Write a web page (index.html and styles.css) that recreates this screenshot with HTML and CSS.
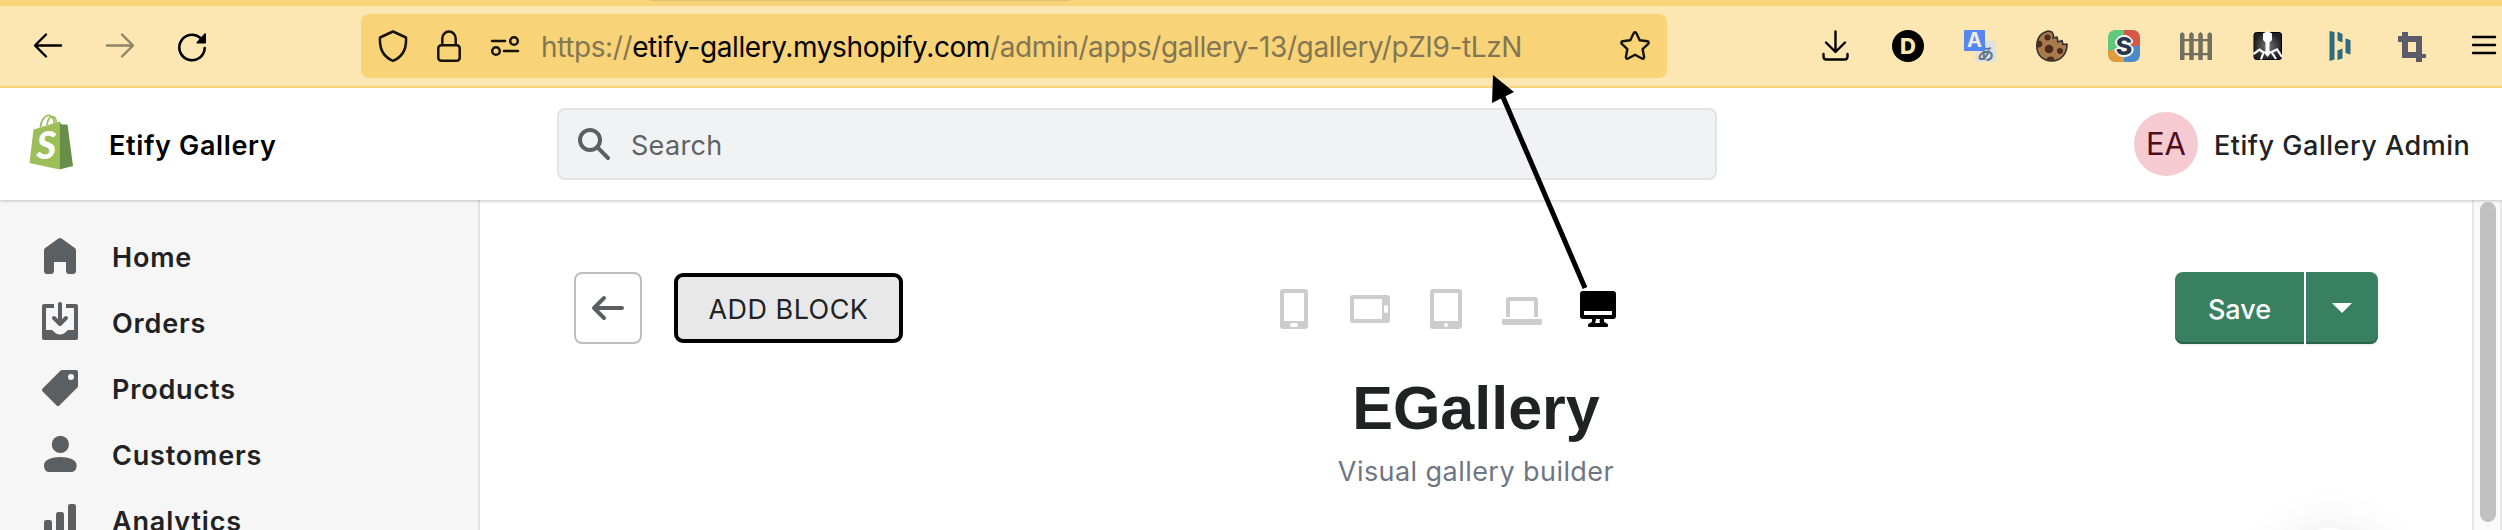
FILE: index.html
```html
<!DOCTYPE html>
<html lang="en">
<head>
<meta charset="utf-8">
<title>Etify Gallery</title>
<link rel="stylesheet" href="styles.css">
</head>
<body>
<div class="window">
  <div class="tabstrip"><div class="tab-edge"></div></div>
  <nav class="toolbar">
    <div class="nav-buttons">
      <svg class="i32" viewBox="0 0 32 32" fill="none" stroke="#000" stroke-width="2.4" stroke-linecap="round" stroke-linejoin="round"><path d="M29 15.500H3.500M14 4.500L3 15.500l11 11"/></svg>
      <svg class="i32" viewBox="0 0 32 32" fill="none" stroke="#8f8468" stroke-width="2.4" stroke-linecap="round" stroke-linejoin="round"><path d="M3 15.500h25.500M18 4.500l11 11-11 11"/></svg>
      <svg class="i32" viewBox="0 0 32 32"><path d="M28.700 18a12.700 12.700 0 1 1-4.500-10.200" fill="none" stroke="#000" stroke-width="2.600" stroke-linecap="round"/><path d="M30 4v8.500a1 1 0 0 1-1 1h-7.500c-1 0-1.300-1-.7-1.600L28.500 3.500c.6-.6 1.500-.3 1.500.5z"/></svg>
    </div>
    <div class="urlbar">
      <svg class="i32" viewBox="0 0 32 32" fill="none" stroke="#15140a" stroke-width="2.500" stroke-linejoin="round"><path d="M16 1.500L29 7.500c.7 12-3.500 19.500-13 23.300C6.500 27 2.300 19.500 3 7.500z"/></svg>
      <svg class="i32 lock" viewBox="0 0 32 32" fill="none" stroke="#15140a" stroke-width="2.500"><rect x="5.300" y="15.300" width="21.400" height="15.400" rx="3"/><path d="M9.300 15V8.500a6.700 7 0 0 1 13.400 0V15"/></svg>
      <svg class="i32 perms" viewBox="0 0 32 32" fill="none" stroke="#15140a" stroke-width="2.500" stroke-linecap="round"><path d="M3 11h13M15 21h14"/><circle cx="25" cy="11" r="3.800"/><circle cx="7" cy="21" r="3.800"/></svg>
      <div class="url">https://<span class="host">etify-gallery.myshopify.com</span>/admin/apps/gallery-13/gallery/pZI9-tLzN</div>
      <svg class="i32 star" viewBox="0 0 32 32" fill="none" stroke="#15140a" stroke-width="2.400" stroke-linejoin="round"><path d="M14.600 3.200c.5-1.200 2.300-1.200 2.800 0l3.300 7 7.700 1c1.300.2 1.700 1.700.8 2.600l-5.600 5.300 1.500 7.800c.2 1.300-1.100 2.200-2.200 1.600L16 24.700l-6.900 3.800c-1.100.6-2.400-.3-2.200-1.600l1.500-7.800-5.600-5.300c-.9-.9-.5-2.400.8-2.600l7.700-1z"/></svg>
    </div>
    <div class="extensions">
      <svg class="i32" viewBox="0 0 32 32" fill="none" stroke="#000" stroke-width="2.400" stroke-linecap="round" stroke-linejoin="round"><path d="M15.500 1.500v20M6 12.500l9.500 9.500 9.500-9.500M3.500 24v2.500q0 3 3 3h18q3 0 3-3V24"/></svg>
      <div class="badge-d">D</div>
      <div class="translate"><span class="tr-back">あ</span><span class="tr-front">A</span></div>
      <svg class="i32" viewBox="0 0 32 32"><path d="M12 1l4 1 1.500 3-.5 3 4-1 1 5 4-1.500 1 4 4-.500c.3 10-6.500 17-15 17C6 31 .8 24 .8 16 .8 8 5 3 12 1z" fill="#a9794c" stroke="#33302e" stroke-width="1.600" stroke-linejoin="round"/><g fill="#4a2b1c"><circle cx="11.500" cy="7.500" r="3"/><circle cx="13" cy="19" r="4.300"/><circle cx="24" cy="21" r="3"/><path d="M1 11a3.500 3.500 0 1 1 0 6zM10.500 30.500a4 4 0 0 1 8 0z"/></g></svg>
      <div class="badge-s"><span>S</span></div>
      <svg class="i32" viewBox="0 0 32 32" fill="#737060"><path d="M0 4l2.200-2L4.500 4v26H0zM9.200 4l2.200-2 2.300 2v26H9.200zM18.300 4l2.200-2 2.300 2v26h-4.500zM27.500 4l2.200-2L32 4v26h-4.500z"/><path d="M0 9h32v2.200H0zM0 23h32v2.200H0z"/></svg>
      <svg class="i32" viewBox="0 0 32 32"><defs><radialGradient id="ph"><stop offset="0" stop-color="#777"/><stop offset="1" stop-color="#222"/></radialGradient></defs><rect x="2" y="2.500" width="27.500" height="27" rx="2.500" fill="url(#ph)" stroke="#000"/><path d="M1.500 24l6-4.500 4 3-2.500 7M30 27l-5-7.500-5.500 2.500 4.500 7" fill="none" stroke="#fff" stroke-width="2.200"/><path d="M15.500 1l4.500 2.500v6.500l-2.500 2.500v8.500l2 1-4 5-4-5 2-1v-8.500L11 10V3.500z" fill="#fff"/></svg>
      <svg class="i32" viewBox="0 0 32 32" fill="#2f6b7c"><path d="M5.500 1l5 1v27.500l-5 1.500zM13.500 1.500l5 2.500v8.500l-5-2zM21.500 8.500l5 1.500v14.500l-5-1.500zM13.500 20.500l5-2v10l-5 1.500z"/></svg>
      <svg class="i32" viewBox="0 0 32 32" fill="#5c5b69"><path d="M6 2h6v4h14v18h4v4h-4v4h-6v-4H6V12H2V6h4zM12 12v10h8V12z" fill-rule="evenodd"/></svg>
      <svg class="i32" viewBox="0 0 32 32" stroke="#000" stroke-width="2.400" stroke-linecap="round"><path d="M5 7h22M5 15h22M5 23h22"/></svg>
    </div>
  </nav>
  <header class="topbar">
    <div class="brand">
      <svg class="logo" viewBox="0 0 48 56"><path d="M5.500 15.500L31.500 7.500v48L1.500 49z" fill="#9cbf59"/><path d="M31.500 7.500l2 3h6l5.500 41.500-13.500 3.500z" fill="#688e49"/><path d="M12.500 13C13 5 18 .8 21.500 1.500c3 .8 4.500 4 4.800 8M19 11c1-7 4-8.500 6-8.300 2 .5 3 2.500 3.300 5.800" fill="none" stroke="#9cbf59" stroke-width="1.800"/><text class="logo-s" x="8.500" y="45">S</text></svg>
      <span class="store">Etify Gallery</span>
    </div>
    <div class="search">
      <svg class="i40" viewBox="0 0 20 20" fill="none" stroke="#5c5f62" stroke-width="2"><circle cx="8" cy="8" r="5"/><path d="M11.600 11.600l5.400 5.400" stroke-linecap="round"/></svg>
      <span class="placeholder">Search</span>
    </div>
    <div class="user"><span class="avatar">EA</span><span class="user-name">Etify Gallery Admin</span></div>
  </header>
  <div class="body">
    <aside class="sidebar">
      <a class="item"><svg class="i40" viewBox="0 0 20 20"><path d="M18 7.261V17.500c0 .841-.672 1.500-1.500 1.500h-2c-.828 0-1.500-.659-1.500-1.500V13H7v4.477C7 18.318 6.328 19 5.500 19h-2c-.828 0-1.500-.682-1.500-1.523V7.261a1.500 1.500 0 01.615-1.210l6.590-4.820a1.481 1.481 0 011.590 0l6.590 4.820A1.500 1.500 0 0118 7.260z"/></svg><span class="label">Home</span></a>
      <a class="item"><svg class="i40" viewBox="0 0 20 20"><path d="M2 1h5v2H3v11h3l2 1.700q2 1 4 0L14 14h3V3h-4V1h5a1 1 0 011 1v16a1 1 0 01-1 1H2a1 1 0 01-1-1V2a1 1 0 011-1z"/><path d="M10 1v10M7 8l3 3 3-3" fill="none" stroke="#5c5f62" stroke-width="2" stroke-linecap="round" stroke-linejoin="round"/></svg><span class="label">Orders</span></a>
      <a class="item"><svg class="i40" viewBox="0 0 20 20"><path fill-rule="evenodd" d="M10.300 1.300A1 1 0 0111 1h7a1 1 0 011 1v7a1 1 0 01-.3.700l-9 9a1 1 0 01-1.400 0l-7-7a1 1 0 010-1.400zM15.500 6a1.500 1.500 0 100-3 1.500 1.500 0 000 3z"/></svg><span class="label">Products</span></a>
      <a class="item"><svg class="i40" viewBox="0 0 20 20"><circle cx="10.200" cy="5.200" r="4.300"/><path d="M2 15.500c0-2.600 4-4 8.200-4s8.100 1.400 8.100 4c0 2.200-1 3.500-2.800 3.500h-11C2.700 19 2 17.500 2 15.500z"/></svg><span class="label">Customers</span></a>
      <a class="item"><svg class="i40" viewBox="0 0 20 20"><rect x="2" y="10" width="4" height="12" rx="1.200"/><rect x="8" y="6" width="4" height="16" rx="1.200"/><rect x="14" y="2" width="4" height="18" rx="1.200"/></svg><span class="label">Analytics</span></a>
    </aside>
    <main class="page">
      <div class="actions">
        <div class="left">
          <button class="back"><svg class="i40" viewBox="0 0 20 20" fill="none" stroke="#5c5f62" stroke-width="2" stroke-linecap="round" stroke-linejoin="round"><path d="M17 10H4M8 5l-5 5 5 5"/></svg></button>
          <button class="add">ADD BLOCK</button>
        </div>
        <div class="devices">
          <svg width="28" height="40" viewBox="0 0 28 40" fill="#ccc"><path fill-rule="evenodd" d="M3 0h22a3 3 0 013 3v34a3 3 0 01-3 3H3a3 3 0 01-3-3V3a3 3 0 013-3zM4 4v28h20V4zM12 34a2 2 0 000 4h4a2 2 0 000-4z"/></svg>
          <svg width="40" height="28" viewBox="0 0 40 28" fill="#ccc"><path fill-rule="evenodd" d="M3 0h34a3 3 0 013 3v22a3 3 0 01-3 3H3a3 3 0 01-3-3V3a3 3 0 013-3zM4 4v20h28V4zM34 12a2 2 0 014 0v4a2 2 0 01-4 0z"/></svg>
          <svg width="32" height="40" viewBox="0 0 32 40" fill="#ccc"><path fill-rule="evenodd" d="M3 0h26a3 3 0 013 3v34a3 3 0 01-3 3H3a3 3 0 01-3-3V3a3 3 0 013-3zM4 4v28h24V4zM16 34a2 2 0 100 4 2 2 0 000-4z"/></svg>
          <svg class="laptop" width="40" height="28" viewBox="0 0 40 28" fill="#ccc"><path d="M4 20V3a3 3 0 013-3h26a3 3 0 013 3v17h-4V4H8v16zM0 22h40v4a2 2 0 01-2 2H2a2 2 0 01-2-2z"/></svg>
          <svg width="36" height="36" viewBox="0 0 36 36"><path fill-rule="evenodd" d="M3 0h30a3 3 0 013 3v22a3 3 0 01-3 3h-9v2c0 2 4 2 4 4v1a1 1 0 01-1 1H9a1 1 0 01-1-1v-1c0-2 4-2 4-4v-2H3a3 3 0 01-3-3V3a3 3 0 013-3zM4 20v4h28v-4zM16 28q0 2-1 4h5q-1-2 0-4z"/></svg>
        </div>
        <div class="save-group"><button class="save">Save</button><button class="more"><svg width="20" height="10" viewBox="0 0 20 10" fill="#fff"><path d="M0 0h20L10 10z"/></svg></button></div>
      </div>
      <h1 class="title">EGallery</h1>
      <p class="subtitle">Visual gallery builder</p>
      <div class="fab"></div>
    </main>
    <div class="scrollbar"><div class="thumb"></div></div>
  </div>
  <svg class="annotation" viewBox="0 0 100 220"><path d="M13 23L95 214" stroke="#000" stroke-width="5"/><path d="M3 1l21 17L2 29z"/></svg>
</div>
</body>
</html>
```
FILE: styles.css
```css
* { box-sizing: border-box; }
body { margin: 0; font-family: Inter, "Liberation Sans", sans-serif; font-size: 27px; color: #202223; }
svg { display: block; flex: none; }
button { font: inherit; padding: 0; margin: 0; border: 0; }
.i32 { width: 32px; height: 32px; }
.i40 { width: 40px; height: 40px; }
.window { position: relative; width: 2502px; height: 530px; overflow: hidden; background: #fff; display: flex; flex-direction: column; }
.tabstrip { height: 6px; flex: none; background: #f8d377; padding-left: 650px; }
.tab-edge { width: 420px; height: 1px; background: #dfbe6c; }
.toolbar { height: 82px; flex: none; background: #fce7b3; border-bottom: 2px solid #f8d377; display: flex; align-items: center; padding: 0 0 0 32px; }
.nav-buttons { display: flex; gap: 40px; width: 329px; flex: none; }
.urlbar { width: 1306px; flex: none; height: 64px; border-radius: 8px; background: #f8d377; display: flex; align-items: center; padding: 0 16px; }
.lock { margin-left: 24px; }
.perms { margin-left: 24px; }
.url { margin-left: 20px; padding-top: 2px; flex: 1; white-space: nowrap; color: #827653; font-size: 28px; letter-spacing: -0.4px; }
.host { color: #000; }
.extensions { display: flex; gap: 40px; margin-left: 153px; }
.extensions > * { margin-top: -2px; }
.badge-d { width: 32px; height: 32px; border-radius: 50%; background: #000; color: #fce7b3; font-weight: 800; font-size: 22px; line-height: 32px; text-align: center; }
.translate { position: relative; width: 32px; height: 32px; }
.tr-back, .tr-front { position: absolute; width: 21px; height: 21px; text-align: center; line-height: 20px; }
.tr-back { right: 0; bottom: 0; background: #dfe1e3; color: #607786; font: 700 17px/23px "Noto Sans CJK JP", sans-serif; }
.tr-front { left: 0; top: 0; background: #5686ef; color: #f2eee5; font-weight: 700; font-size: 20px; border-radius: 1px; }
.badge-s { width: 32px; height: 32px; border-radius: 7px; background: conic-gradient(#d5584b 0 25%, #4a8bc8 0 50%, #df9b3c 0 70%, #5fc87b 0); text-align: center; line-height: 32px; font-weight: 800; font-size: 25px; color: #28384a; text-shadow: 2px 0 #fff, -2px 0 #fff, 0 2px #fff, 0 -2px #fff, 1px 1px #fff, -1px -1px #fff; }
.extensions { padding-top: 2px; }
.topbar { height: 112px; flex: none; display: flex; align-items: center; background: #fff; position: relative; z-index: 1; box-shadow: 0 0 4px rgba(0,0,0,.35); padding-left: 28px; clip-path: inset(0 0 -8px 0); }
.brand { display: flex; align-items: center; width: 529px; flex: none; }
.logo { width: 48px; height: 56px; margin-top: -5px; }
.logo-s { font: italic 900 38px Lato, sans-serif; fill: #fff; }
.store { margin-left: 33px; padding-top: 2px; font-weight: 600; color: #000; letter-spacing: .65px; }
.search { width: 1160px; flex: none; height: 72px; border: 2px solid #e1e3e5; border-radius: 8px; background: #f1f2f3; display: flex; align-items: center; padding-left: 15px; color: #5f6265; }
.placeholder { margin-left: 17px; padding-top: 2px; letter-spacing: .3px; }
.user { display: flex; align-items: center; margin-left: 417px; font-weight: 500; }
.avatar { width: 64px; height: 64px; border-radius: 50%; background: #f5cad0; color: #4f0e1f; text-align: center; line-height: 64px; font-size: 31px; font-weight: 400; flex: none; }
.user-name { margin-left: 16px; padding-top: 2px; white-space: nowrap; letter-spacing: .52px; }
.body { flex: 1; display: flex; min-height: 0; }
.sidebar { width: 480px; flex: none; background: #f6f6f7; border-right: 2px solid #e1e3e5; padding: 24px 0 0 40px; overflow: hidden; }
.item { display: flex; align-items: center; height: 66px; font-weight: 600; fill: #5c5f62; letter-spacing: .82px; }
.item svg { margin-top: -2px; }
.label { margin-left: 32px; }
.page { flex: 1; padding: 72px 94px 0; position: relative; overflow: hidden; }
.actions { display: grid; grid-template-columns: 706px 1fr auto; height: 72px; align-items: center; }
.left { display: flex; align-items: center; gap: 32px; }
.back { width: 68px; height: 72px; border: 2px solid #babfc3; border-radius: 8px; background: #fff; padding-left: 12px; }
.add { width: 229px; height: 70px; border: 4px solid #000; border-radius: 9px; background: #e8e8e8; color: #202223; letter-spacing: .45px; padding-top: 2px; }
.devices { display: flex; align-items: center; gap: 40px; padding-top: 2px; }
.devices svg:first-child { margin-right: 2px; }
.devices .laptop { margin: 4px -2px 0 0; }
.save-group { display: flex; gap: 2px; }
.save, .more { height: 72px; background: #398063; color: #fff; box-shadow: inset 0 -2px #2b624b, 0 2px 1px rgba(0,0,0,.05); }
.save { width: 129px; border-radius: 8px 0 0 8px; font-weight: 500; padding-top: 2px; }
.more { width: 72px; border-radius: 0 8px 8px 0; padding-left: 26px; }
.title { margin: 28px 0 0; text-align: center; font: 700 61px/72px "Liberation Sans", Arial, sans-serif; }
.subtitle { margin: 10px 0 0; text-align: center; line-height: 36px; color: #6d7681; letter-spacing: .44px; }
.fab { position: absolute; left: 1790px; top: 328px; width: 120px; height: 120px; border-radius: 50%; background: #fff; box-shadow: 0 4px 50px rgba(0,0,0,.1); }
.scrollbar { width: 30px; flex: none; background: #fafafa; border: solid #e8e8e8; border-width: 0 2px; padding: 2px 4px 0 6px; }
.thumb { width: 16px; height: 320px; border-radius: 8px; background: #c1c1c1; }
.annotation { position: absolute; left: 1490px; top: 74px; width: 100px; height: 220px; z-index: 2; }
```
